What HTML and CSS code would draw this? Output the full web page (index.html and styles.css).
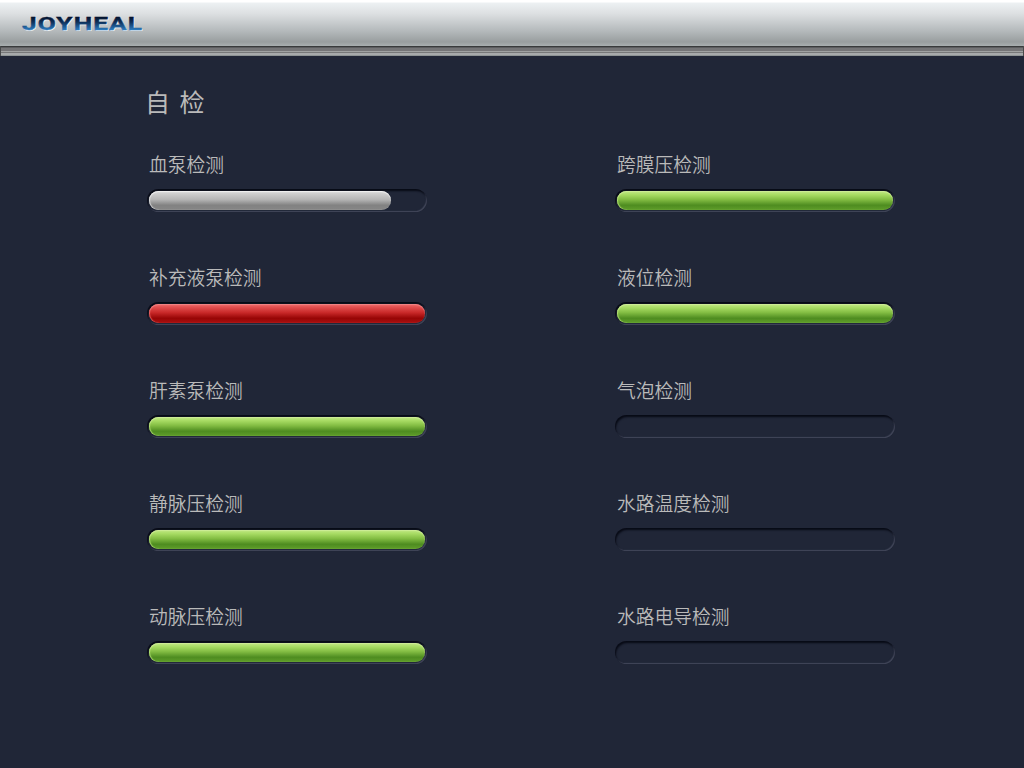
FILE: index.html
```html
<!DOCTYPE html>
<html lang="zh-CN">
<head>
<meta charset="utf-8">
<title>自检</title>
<link rel="stylesheet" href="styles.css">
</head>
<body>
<header class="header">
  <svg class="logo" width="126" height="24" viewBox="0 0 126 24" role="img" aria-label="JOYHEAL">
    <defs>
      <linearGradient id="logo-fill" gradientUnits="userSpaceOnUse" x1="0" y1="6" x2="0" y2="19">
        <stop offset="0" stop-color="#03122c"/>
        <stop offset=".4" stop-color="#0e315b"/>
        <stop offset="1" stop-color="#2b7cc0"/>
      </linearGradient>
    </defs>
    <text class="logo-shade" x="3" y="20" textLength="121" lengthAdjust="spacingAndGlyphs" aria-hidden="true">JOYHEAL</text>
    <text class="logo-text" x="2" y="19" textLength="121" lengthAdjust="spacingAndGlyphs">JOYHEAL</text>
  </svg>
</header>
<div class="groove"></div>
<main class="content">
  <h1 class="title">自 检</h1>
  <div class="columns">
    <section class="column">
      <div class="check"><p class="label">血泵检测</p><div class="track"><div class="fill running" style="width:242px"></div></div></div>
      <div class="check"><p class="label">补充液泵检测</p><div class="track"><div class="fill failed"></div></div></div>
      <div class="check"><p class="label">肝素泵检测</p><div class="track"><div class="fill passed"></div></div></div>
      <div class="check"><p class="label">静脉压检测</p><div class="track"><div class="fill passed"></div></div></div>
      <div class="check"><p class="label">动脉压检测</p><div class="track"><div class="fill passed"></div></div></div>
    </section>
    <section class="column">
      <div class="check"><p class="label">跨膜压检测</p><div class="track"><div class="fill passed"></div></div></div>
      <div class="check"><p class="label">液位检测</p><div class="track"><div class="fill passed"></div></div></div>
      <div class="check"><p class="label">气泡检测</p><div class="track"></div></div>
      <div class="check"><p class="label">水路温度检测</p><div class="track"></div></div>
      <div class="check"><p class="label">水路电导检测</p><div class="track"></div></div>
    </section>
  </div>
</main>
</body>
</html>
```
FILE: styles.css
```css
* { box-sizing: border-box; }
body {
  margin: 0;
  height: 768px;
  overflow: hidden;
  background: #202637;
  color: #bababa;
  font-family: "Noto Sans CJK SC", sans-serif;
}
.header {
  height: 46px;
  padding: 11px 0 0 20px;
  background: linear-gradient(#fff 0, #fff 2px, #edf1f3 3px, #dcdfe1 14px, #b4b9bb 31px, #999e9f 42px, #a9afb0 46px);
}
.logo { display: block; }
.logo text {
  font-family: Roboto, sans-serif;
  font-size: 18.3px;
  font-weight: 700;
  letter-spacing: .8px;
}
.logo-text { fill: url(#logo-fill); stroke: url(#logo-fill); stroke-width: .4px; }
.logo-shade { fill: #f1f3f4; }
.groove {
  height: 10px;
  border: solid #484a4b;
  border-width: 0 1px;
  background: linear-gradient(#393b3c 0 1px, #5c5d5f 1px 2px, #757577 2px 5px, #a0a2a2 5px 6px, #777879 6px 7px, #a7aaab 7px 9px, #8e9495 9px 10px);
}
.content { padding: 26px 0 0 147px; }
.title {
  margin: 0 0 0 -2px;
  height: 38px;
  font-size: 25px;
  font-weight: 400;
  line-height: 38px;
  word-spacing: 4px;
}
.columns { display: flex; gap: 187px; padding-top: 29px; }
.column { width: 281px; }
.check { height: 113px; }
.label {
  margin: 0 0 10px;
  height: 30px;
  padding-left: 2px;
  font-size: 18.75px;
  font-weight: 350;
  line-height: 30px;
}
.track {
  width: 280px;
  height: 23px;
  padding: 2px;
  border-radius: 12px;
  background: #202637;
  box-shadow: inset 1px 2px 2px #070a15, inset -1px -1px 1px #42475a;
}
.fill {
  width: 276px;
  height: 19px;
  border-radius: 10px;
}
.running {
  background: linear-gradient(#dedede, #cdcdcd 15%, #b5b5b5 45%, #828282 75%, #868686);
  box-shadow: inset 0 1px 1px #f1f1f1, inset 1px 0 1px #d3d3d3;
}
.failed {
  background: linear-gradient(#f06b6b, #df4b4b 20%, #c92929 45%, #970505 75%, #a81010);
  box-shadow: inset 0 1px 1px #f08585, inset 1px 0 1px #df5454;
}
.passed {
  background: linear-gradient(#c0e883, #a7db63 20%, #83bd43 45%, #4e8c20 75%, #5f9d2a);
  box-shadow: inset 0 1px 1px #cfeb98, inset 1px 0 1px #a7d769;
}
```
